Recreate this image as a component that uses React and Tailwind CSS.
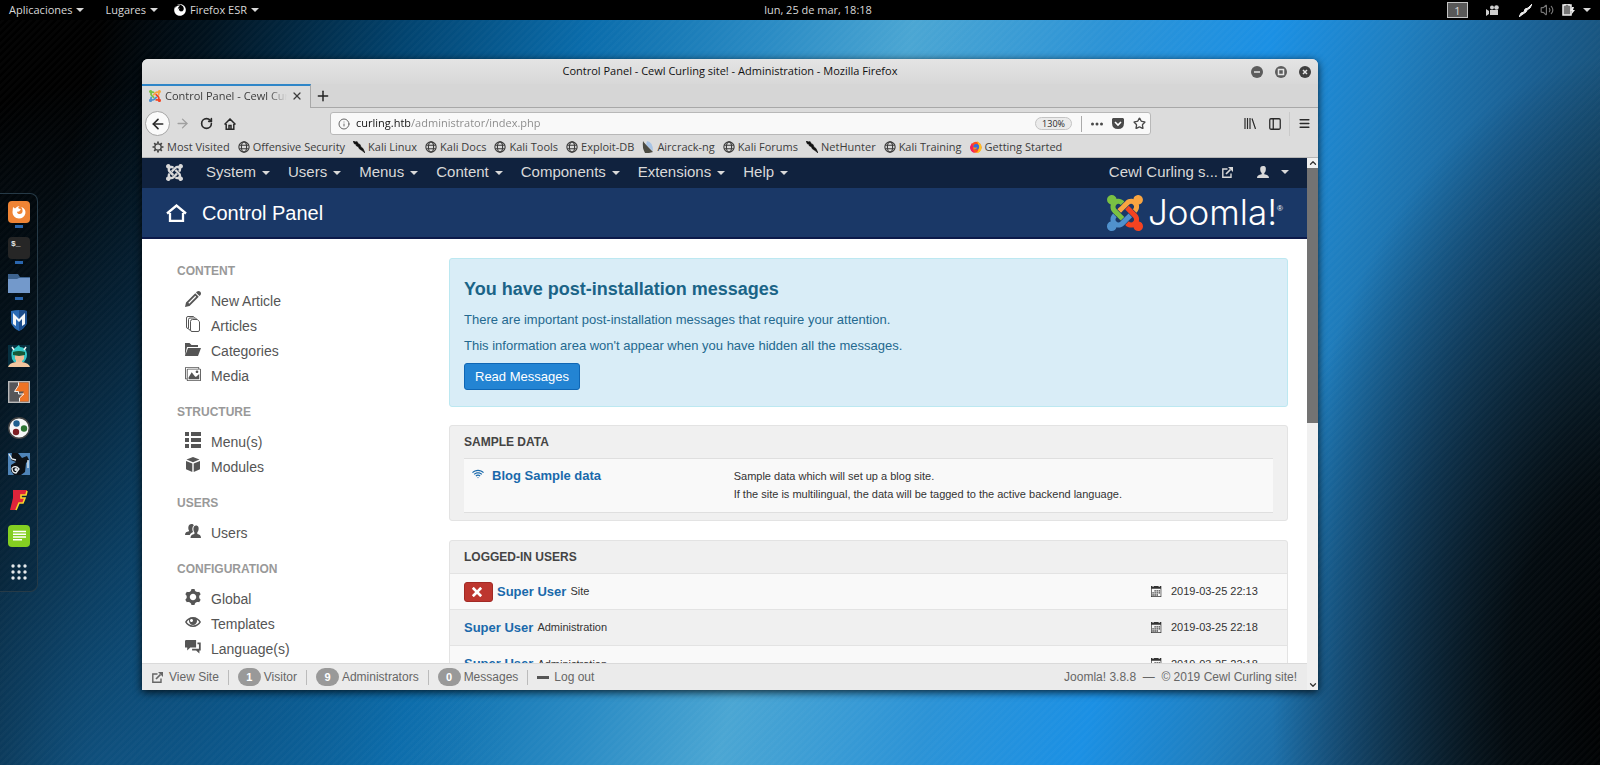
import { FaFirefox } from "react-icons/fa"
import { ImPencil, ImFolderOpen, ImImages, ImCog, ImEye, ImConnection, ImCalendar, ImCross } from "react-icons/im"
import {
  ArrowLeft, ArrowRight, RotateCw, Plus, X, Info, Star, Menu, Volume2, ChevronUp, ChevronDown, PanelLeft
} from "lucide-react"

const leaves = [
  ["#7ac143", "M.6 92.1C.6 58.8 27.4 32 60.4 32c30 0 54.5 21.9 59.2 50.2 32.6-7.6 67.1.6 96.5 30l-44.3 44.3c-20.5-20.5-42.6-16.3-55.4-3.5-14.3 14.3-14.3 37.9 0 52.2l99.5 99.5-44 44.3c-87.7-87.2-49.7-49.7-99.8-99.7-26.8-26.5-35-64.8-24.8-98.9C20.4 144.6.6 120.7.6 92.1z"],
  ["#f9a541", "M130.1 208.5l44.3 44.3c10-10 89.7-89.7 99.7-99.8 14.3-14.3 37.6-14.3 51.9 0 12.8 12.8 17 35-3.5 55.4l44 44.3c31.2-31.2 38.5-67.6 28.9-101.2 29.2-4.1 51.9-29.2 51.9-59.5 0-33.2-26.8-60.1-59.8-60.1-30.3 0-55.4 22.5-59.5 51.6-33.8-9.9-71.7-1.5-98.3 25.1-18.3 19.1-71.1 71.5-99.6 99.9z"],
  ["#f44321", "M396.4 360.7c8.2-32.7-.9-68.5-26.3-93.9-11.8-12.2 5 4.7-99.5-99.7l-44.3 44.3 99.7 99.7c14.3 14.3 14.3 37.6 0 51.9-12.8 12.8-35 17-55.4-3.5l-44 44.3c27.6 30.2 68 38.8 102.7 28 5.5 27.4 29.7 48.1 58.9 48.1 33 0 59.8-26.8 59.8-60.1 0-30.2-22.5-55-51.6-59.1z"],
  ["#5091cd", "M312.1 307.6l-44-44.3c-87 86.4-50.4 50.4-99.7 99.8-14.3 14.3-37.6 14.3-51.9 0-13.1-13.4-16.9-35.3 3.2-55.4l-44-44.3c-30.2 30.2-38 65.2-29.5 98.3-26.7 6-46.2 29.9-46.2 58.2C0 453.2 26.8 480 59.8 480c28.6 0 52.5-19.8 58.6-46.7 32.7 8.2 68.5-.6 94.2-26 32.1-32 12.2-12.4 99.5-99.7z"]
]

function JoomlaMark({ className, mono }) {
  return (
    <svg viewBox="0 32 448 448" className={className}>
      {leaves.map(([fill, d]) => <path key={fill} d={d} fill={mono ? "currentColor" : fill} />)}
    </svg>
  )
}

function Caret({ className = "" }) {
  return (
    <svg viewBox="0 0 8 4" className={"w-2 h-1 shrink-0 " + className}>
      <path d="M0 0h8L4 4z" fill="currentColor" />
    </svg>
  )
}

function OutLink({ className }) {
  return (
    <svg viewBox="0 0 11 11" className={className} fill="none" stroke="currentColor" strokeWidth="1.400">
      <path d="M5.500 2H.8v8.200H9V6.500" />
      <path d="M4 7l4.500-4.500" strokeWidth="1.700" />
      <path d="M6 0h5v5z" fill="currentColor" stroke="none" />
    </svg>
  )
}

/* ---------- bookmark icons ---------- */

function Globe() {
  return (
    <svg viewBox="0 0 14 14" className="size-3 shrink-0" fill="none" stroke="#3c3c3c" strokeWidth="1.3">
      <circle cx="7" cy="7" r="6" />
      <ellipse cx="7" cy="7" rx="3" ry="6" />
      <path d="M1.5 5h11M1.5 9h11" />
    </svg>
  )
}

function Knife() {
  return (
    <svg viewBox="0 0 12 12" className="size-3 shrink-0">
      <path d="M0 0l3 1 1-.6L5.500 3l1.500.4L8 6l2 1.500L12 12 9 9.500 6.500 8 5.500 6 3 4.500 3.200 3.300 1.500 3z" fill="#111" stroke="#111" strokeWidth=".6" />
    </svg>
  )
}

function Gear() {
  return (
    <svg viewBox="0 0 14 14" className="size-3 shrink-0" fill="none" stroke="#3c3c3c">
      <circle cx="7" cy="7" r="3.700" strokeWidth="1.500" />
      <path strokeWidth="2" d="M7 .6v2.400M7 11v2.400M.6 7h2.400M11 7h2.400M2.600 2.600l1.500 1.500M9.900 9.900l1.500 1.500M2.600 11.400l1.500-1.500M9.900 4.100l1.500-1.500" />
    </svg>
  )
}

function Aircrack() {
  return (
    <svg viewBox="0 0 12 12" className="size-3 shrink-0">
      <path d="M5 0q6 1 6 10L4 4z" fill="#a9c4e4" />
      <path d="M1 0q1 2 10 11l-4 1H3Q0 7 1 0z" fill="#4a4a42" />
    </svg>
  )
}

function FoxColor() {
  return (
    <svg viewBox="0 0 12 12" className="size-3 shrink-0">
      <circle cx="6" cy="6.300" r="5.500" fill="#ff4f1f" />
      <path d="M7 0q5 3 4.500 7.500A5.500 5.500 0 0 1 6 12q5-3 1-12z" fill="#ffc21f" />
      <path d="M0 6q0 5 5 6-3-3-2-6L2 2z" fill="#f21d63" />
      <circle cx="6.300" cy="5.800" r="2.800" fill="#2f6fe0" />
      <path d="M3.500 6q2 1 4 0-1 3-4 2z" fill="#ff8a1f" />
    </svg>
  )
}

const bookmarks = [
  ["Most Visited", Gear],
  ["Offensive Security", Globe],
  ["Kali Linux", Knife],
  ["Kali Docs", Globe],
  ["Kali Tools", Globe],
  ["Exploit-DB", Globe],
  ["Aircrack-ng", Aircrack],
  ["Kali Forums", Globe],
  ["NetHunter", Knife],
  ["Kali Training", Globe],
  ["Getting Started", FoxColor]
]

/* ---------- sidebar icons ---------- */

function Papers({ className }) {
  return (
    <svg viewBox="0 0 16 16" className={className} fill="none" stroke="currentColor">
      <path d="M3 12.500q-1.500 0-1.500-1.500V2Q1.500.5 3 .5h5.500l1 1" />
      <path d="M5 14q-1.500 0-1.500-1.500v-9Q3.500 2 5 2h5.500l1 1" />
      <path d="M7.500 3.500h4.800l2.200 2.200v8.300q0 1.500-1.500 1.500H7q-1.500 0-1.500-1.500V5.500q0-2 2-2z" />
    </svg>
  )
}

function Rows({ className }) {
  return (
    <svg viewBox="0 0 16 16" className={className} fill="currentColor">
      <path d="M0 0h4v4H0zM6 0h10v4H6zM0 6h4v4H0zM6 6h10v4H6zM0 12h4v4H0zM6 12h10v4H6z" />
    </svg>
  )
}

function Cube({ className }) {
  return (
    <svg viewBox="0 0 16 16" className={className} fill="currentColor">
      <path d="M8 0l6.500 2.500L8 5.200 1.500 2.500zM1 4l6.300 2.600V15L1 12.200zM15 4L8.700 6.600V15l6.300-2.800z" />
    </svg>
  )
}

function People({ className }) {
  return (
    <svg viewBox="0 0 16 16" className={className} fill="currentColor">
      <path d="M6.500 1C8 1 8.700 1.600 8.800 2.600 7 4 7 7 8 9c-2 1-3 2-3.200 3H0c0-2.500 1.500-3.200 4-3.700V7.500C2.800 5.500 3 1 6.500 1z" />
      <path d="M11 2.500c2.500 0 3 2.300 2.500 4.500-.2 1-.6 1.700-1.200 2.300V11c2.600.7 3.700 1.500 3.700 4H5.500c0-2.500 1.300-3.400 3.900-4V9.300C8 7.500 7.800 2.500 11 2.500z" />
    </svg>
  )
}

function Chat({ className }) {
  return (
    <svg viewBox="0 0 18 16" className={className} fill="currentColor">
      <path d="M1 0h11.500v8.500H6L2.500 12V8.500H0V1z" />
      <path d="M14 3h3.700v9h-1.500v3.200L12.500 12H8v-2h7.700V5H14z" />
    </svg>
  )
}

const sections = [
  ["CONTENT", [["New Article", ImPencil], ["Articles", Papers], ["Categories", ImFolderOpen], ["Media", ImImages]]],
  ["STRUCTURE", [["Menu(s)", Rows], ["Modules", Cube]]],
  ["USERS", [["Users", People]]],
  ["CONFIGURATION", [["Global", ImCog], ["Templates", ImEye], ["Language(s)", Chat]]]
]

/* ---------- dock ---------- */

const dock = [
  { name: "Firefox", open: true, art: <>
    <rect width="22" height="22" rx="4" fill="#ef8435" />
    <path d="M5 6l2 1.500Q9 5 11.500 5L10 7l3 1.500-2 2-2 .2c0 2.300 3.500 3.300 5 1.300 1-1.600.8-4-.8-6C17 7.500 18 10 17.300 12.800 16.500 16 14 17.500 11 17.500 7 17.500 4.500 14.500 4.500 11z" fill="#fff" />
  </> },
  { name: "Terminal", open: true, art: <>
    <rect width="22" height="22" rx="4" fill="#262626" />
    <text x="3" y="9" fontSize="8" fontFamily="Liberation Mono, monospace" fontWeight="bold" fill="#e8e8e8">$_</text>
  </> },
  { name: "Files", open: true, art: <>
    <path d="M0 1h10l2 3h10v16H0z" fill="#3d638f" />
    <path d="M0 6h9l2-1h11v15H0z" fill="#7399cb" />
  </> },
  { name: "Metasploit", art: <>
    <path d="M3 2q8-2 16 0v12q-2 5-8 8-6-3-8-8z" fill="#2a6ab4" />
    <path d="M11 1q4 0 8 1v12q-2 5-8 8z" fill="#1c4d8c" />
    <path d="M5 15V4l6 6 6-6v11l-3 2v-7l-3 3-3-3v7z" fill="#f2f5f8" />
  </> },
  { name: "Armitage", art: <>
    <rect width="22" height="22" fill="#073040" />
    <path d="M4 14Q2 5 7 3l4-3 1 2q6 0 7 7 0 3-1 5l-2 3H6z" fill="#36c7c6" />
    <path d="M0 22q1-4 8-5v-3h6v3q7 1 8 5z" fill="#f3c7a0" />
    <path d="M7 9h9v5l-3 3h-3l-3-3z" fill="#f0bd96" />
    <path d="M5 7q6-2 12 0v3l-6 1-6-1z" fill="#155a3a" />
    <path d="M4 2l2 3M18 2l-2 3" stroke="#f5f5f5" strokeWidth="1.500" />
  </> },
  { name: "Burp Suite", art: <>
    <rect x=".7" y=".7" width="20.600" height="20.600" fill="#55565a" stroke="#b9b9b9" strokeWidth="1.400" />
    <path d="M10.500 1.400h10.100v19.200H11.500v-4L16 10.500H10.500z" fill="#ee7426" />
    <path d="M10.500 4L6.500 10.500h5z" fill="#ee7426" />
    <path d="M10.500 1.400v3L6.500 10.500h4v2.500H16l-4.500 4v3.600" stroke="#eee" fill="none" />
  </> },
  { name: "Maltego", art: <>
    <circle cx="11" cy="11" r="10.300" fill="#f6f6f6" stroke="#454545" strokeWidth="1.400" />
    <circle cx="8.500" cy="6.500" r="3.200" fill="#1f5f8f" />
    <circle cx="16" cy="11.500" r="3.200" fill="#2d7331" />
    <circle cx="8" cy="15" r="3.200" fill="#7d1f24" />
  </> },
  { name: "BeEF", art: <>
    <rect width="22" height="22" fill="#4e84b8" />
    <path d="M4 0h6l4 5 5-2 2 4-3 3-1 9-4 3H6l-3-4v-6l5-3-5-2z" fill="#0c1116" />
    <path d="M4 15q4-3 7 1l-3 4q-4 0-4-5M1 1l3 5 4 1M20 7v8" stroke="#e8eef2" strokeWidth="1.300" fill="none" />
    <circle cx="8" cy="16.500" r="1.500" fill="#e8eef2" />
  </> },
  { name: "Faraday", art: <>
    <path d="M5 1h14l-1 5h-5v3h4l-2 5h-4l-3 7H2L5 9z" fill="#e0243a" />
    <path d="M19 2l-1 4h-5v3h4l-2 5h-4l-3 7" stroke="#f8d62c" strokeWidth="1.600" fill="none" />
  </> },
  { name: "Leafpad", art: <>
    <rect width="22" height="22" rx="4" fill="#84cf22" />
    <path d="M5 6.500h13M5 9.300h13M5 12h13M5 14.700h9" stroke="#fff" strokeWidth="1.600" />
  </> },
  { name: "Show applications", art: <g fill="#e6eaec">
    {[5, 11, 17].map(y => [5, 11, 17].map(x => <circle key={x + "-" + y} cx={x} cy={y} r="1.700" />))}
  </g> }
]

function Dock() {
  return (
    <aside className="w-[38px] shrink-0 self-center rounded-r-lg border border-l-0 border-[#263a47] bg-black/15 pb-px">
      {dock.map(d => (
        <button key={d.name} type="button" aria-label={d.name} className="flex h-9 w-full flex-col items-center pt-[7px]">
          <svg viewBox="0 0 22 22" className="size-[22px] shrink-0">{d.art}</svg>
          {d.open && <span className="mt-[2px] h-[3px] w-2 bg-[#2a66ae]" />}
        </button>
      ))}
    </aside>
  )
}

function TopBar() {
  return (
    <header className="flex h-5 shrink-0 items-center bg-black px-[9px] text-[11px] font-medium text-[#d8d8d8]">
      <div className="flex flex-1 items-center">
        <button type="button" className="mr-[21px] flex items-center gap-1">Aplicaciones <Caret /></button>
        <button type="button" className="mr-4 flex items-center gap-1">Lugares <Caret /></button>
        <button type="button" className="flex items-center gap-1">
          <FaFirefox className="size-3 text-white" />Firefox ESR <Caret />
        </button>
      </div>
      <time className="ml-9">lun, 25 de mar, 18:18</time>
      <div className="flex flex-1 items-center justify-end">
        <button type="button" className="mr-[18px] h-4 w-[21px] border border-[#c4c4c4] bg-[#585858] leading-none">1</button>
        <svg viewBox="0 0 13 11" className="mr-5 h-[11px] w-[13px]" fill="#cfcfcf">
          <circle cx="6" cy="2.500" r="2" /><circle cx="10.500" cy="2.500" r="2.300" />
          <path d="M4 5h8v5H4zM0 4l3 2v3l-3 2z" />
        </svg>
        <svg viewBox="0 0 13 13" className="mr-2 size-[13px]">
          <path d="M0 13l2-4 3-1 1-3 3-1 4-4-2 4-3 2-1 2-3 2z" fill="#eee" stroke="#eee" />
        </svg>
        <Volume2 className="mr-2 size-[14px] text-[#777]" />
        <svg viewBox="0 0 13 12" className="mr-2 h-3 w-[13px]">
          <path d="M3 0h4v1h2v10H1V1h2z" fill="#777" stroke="#eee" strokeWidth="1.500" />
          <path d="M10 3l-2 4h2l-1 4 4-5h-2l1-3z" fill="#eee" />
        </svg>
        <Caret />
      </div>
    </header>
  )
}

function BrowserChrome() {
  return (
    <div className="shrink-0 bg-[#dcdcdc] text-[11px] text-[#3c3c3c]">
      <div className="flex h-[25px] items-center bg-linear-to-b from-[#e4e4e4] to-[#d8d8d8] px-[7px]">
        <span className="w-[60px]" />
        <h1 className="flex-1 text-center font-medium text-[#111]">Control Panel - Cewl Curling site! - Administration - Mozilla Firefox</h1>
        <div className="flex w-[60px] justify-end gap-3">
          {["Minimize", "Maximize", "Close"].map(n => (
            <button key={n} type="button" aria-label={n}>
              <svg viewBox="0 0 12 12" className="size-3" fill="none" stroke="#e4e4e4" strokeWidth="1.500">
                <circle cx="6" cy="6" r="6" fill={n === "Close" ? "#3f3f3f" : "#5c5c5c"} stroke="none" />
                {n === "Minimize" && <path d="M3 6h6" />}
                {n === "Maximize" && <rect x="3.500" y="3.500" width="5" height="5" />}
                {n === "Close" && <path d="M4 4l4 4M8 4l-4 4" />}
              </svg>
            </button>
          ))}
        </div>
      </div>

      <div className="flex h-6 bg-[#d6d6d6]">
        <div className="flex w-[169px] items-center border-t-2 border-r border-t-[#2f86c8] border-r-[#a8a8a8] bg-[#dcdcdc] pb-[2px] pl-[7px]">
          <JoomlaMark className="size-3 shrink-0" />
          <span className="ml-1 flex-1 overflow-hidden whitespace-nowrap mask-r-from-85% mask-r-to-100%">Control Panel - Cewl Curling site!</span>
          <button type="button" aria-label="Close tab" className="mr-[7px] ml-1"><X className="size-3" strokeWidth={2.5} /></button>
        </div>
        <div className="flex flex-1 items-center border-b border-[#a8a8a8] pl-1">
          <button type="button" aria-label="New tab"><Plus className="size-4 text-[#222]" strokeWidth={2.2} /></button>
        </div>
      </div>

      <div className="flex h-[31px] items-center pr-[7px] pl-[3px] text-[#2a2a2a]">
        <button type="button" aria-label="Back" className="flex size-[25px] items-center justify-center rounded-full border border-[#a5a5a5] bg-[#fafafa]">
          <ArrowLeft className="size-4" strokeWidth={2.5} />
        </button>
        <button type="button" aria-label="Forward" className="ml-[5px]"><ArrowRight className="size-[15px] text-[#a0a0a0]" strokeWidth={2.2} /></button>
        <button type="button" aria-label="Reload" className="ml-[10px]"><RotateCw className="size-[13px]" strokeWidth={3} /></button>
        <button type="button" aria-label="Home" className="ml-[11px]">
          <svg viewBox="0 0 12 12" className="size-3" fill="none" stroke="currentColor" strokeWidth="1.500">
            <path d="M.5 6.500L6 1l5.500 5.500M2.200 6v5.200h7.600V6M5 11V7.500h2V11" />
          </svg>
        </button>
        <div className="mr-[93px] ml-[94px] flex h-[23px] flex-1 items-center rounded-[3px] border border-[#b8b8b8] bg-[#f9f9f9] pr-1 pl-[7px]">
          <Info className="size-3 text-[#666]" />
          <input
            aria-label="Address"
            defaultValue="curling.htb/administrator/index.php"
            className="ml-[6px] min-w-0 flex-1 bg-linear-to-r from-[#111] from-[54px] to-[#888] to-[54px] bg-clip-text text-transparent outline-none"
          />
          <span className="mr-[9px] rounded-full border border-[#c4c4c4] bg-[#ebebeb] px-[6px] text-[9px] leading-[11px]">130%</span>
          <span className="mr-[9px] h-4 w-px bg-[#aaa]" />
          <svg viewBox="0 0 12 4" className="mr-[9px] h-1 w-3" fill="#4a4a4a">
            <circle cx="1.500" cy="2" r="1.500" /><circle cx="6" cy="2" r="1.500" /><circle cx="10.500" cy="2" r="1.500" />
          </svg>
          <svg viewBox="0 0 12 11" className="mr-[9px] h-[11px] w-3">
            <path d="M1 0h10l1 1v4q0 6-6 6T0 5V1z" fill="#4a4a4a" />
            <path d="M3 4l3 3 3-3" fill="none" stroke="#fff" strokeWidth="1.600" />
          </svg>
          <Star className="size-[13px] text-[#4a4a4a]" strokeWidth={2.5} />
        </div>
        <svg viewBox="0 0 12 11" className="mr-3 h-[11px] w-3" stroke="#2a2a2a" strokeWidth="1.200">
          <path d="M1 0v11M3.500 0v11M6 0v11M8 .5L11.500 11" />
        </svg>
        <PanelLeft className="mr-[7px] size-[14px]" strokeWidth={2.2} />
        <span className="mr-[8px] h-6 w-px bg-[#cacaca]" />
        <Menu className="size-[13px]" strokeWidth={2.8} />
      </div>

      <nav className="flex h-[19px] items-center gap-2 overflow-hidden border-b border-[#b5b5b5] px-[10px] pb-[2px] whitespace-nowrap">
        {bookmarks.map(([name, Icon]) => (
          <a key={name} href="#" className="flex items-center gap-[3px]"><Icon />{name}</a>
        ))}
      </nav>
    </div>
  )
}

function AdminHeader() {
  return (
    <>
      <nav className="flex h-[30px] shrink-0 items-center bg-[#10223e] pr-[18px] pb-[2px] pl-6 text-[15px] text-[#d9d9d9]">
        <a href="#" aria-label="Joomla"><JoomlaMark mono className="mr-[23px] size-[17px]" /></a>
        <div className="flex flex-1 gap-[18px]">
          {["System", "Users", "Menus", "Content", "Components", "Extensions", "Help"].map(m => (
            <a key={m} href="#" className="flex items-center gap-[6px]">{m} <Caret className="mt-px" /></a>
          ))}
        </div>
        <a href="#" className="mr-6 flex items-center gap-1">Cewl Curling s... <OutLink className="size-[11px]" /></a>
        <a href="#" aria-label="Account" className="flex items-center gap-3">
          <svg viewBox="0 0 12 12" className="size-3" fill="currentColor">
            <path d="M6 0c3 0 3 2 2.800 4C8.600 5.500 8 6.500 7.300 7v1.200C10.500 8.800 12 9.500 12 12H0c0-2.500 1.500-3.200 4.700-3.800V7C3.500 6 3.200 4.500 3.200 3 3.200 1 4 0 6 0z" />
          </svg>
          <Caret />
        </a>
      </nav>
      <div className="flex h-[51px] shrink-0 items-center border-b-2 border-[#0c1a4a] bg-[#1a3867] pr-6 pl-6 text-white">
        <svg viewBox="0 0 21 18" className="h-[18px] w-[21px]" fill="none" stroke="currentColor" strokeWidth="2.300">
          <path d="M1 9.500L10.500 1.500 20 9.500M4 9v8h13V9" />
        </svg>
        <h2 className="ml-[15px] flex-1 text-xl">Control Panel</h2>
        <JoomlaMark className="size-9" />
        <span className="ml-[5px] font-['Inter'] text-[35px] leading-none font-light">Joomla!</span>
        <sup className="text-[8px]">®</sup>
      </div>
    </>
  )
}

function Sidebar() {
  return (
    <aside className="w-[307px] shrink-0 pt-[22px] pl-[35px] text-[#555]">
      {sections.map(([title, items]) => (
        <section key={title} className="mb-[14px]">
          <h3 className="mb-[7px] text-xs leading-5 font-bold text-[#999]">{title}</h3>
          <ul className="pl-2">
            {items.map(([label, Icon]) => (
              <li key={label}>
                <a href="#" className="flex h-[25px] items-center gap-[10px] text-sm">
                  <Icon className="mb-1 size-4" />{label}
                </a>
              </li>
            ))}
          </ul>
        </section>
      ))}
    </aside>
  )
}

const sessions = [
  { where: "Site", date: "2019-03-25 22:13", kick: true },
  { where: "Administration", date: "2019-03-25 22:18" },
  { where: "Administration", date: "2019-03-25 22:18" }
]

function Panels() {
  return (
    <main className="min-w-0 flex-1 pt-[19px] pr-[19px] text-[#333]">
      <section className="mb-[18px] rounded-[3px] border border-[#bce8f1] bg-[#d9edf7] px-[14px] pt-[18px] pb-4 text-[#24698f]">
        <h3 className="text-lg leading-6 font-bold text-[#1a6487]">You have post-installation messages</h3>
        <p className="mt-2 text-[13px] leading-[22px]">There are important post-installation messages that require your attention.</p>
        <p className="mt-1 text-[13px] leading-[22px]">This information area won't appear when you have hidden all the messages.</p>
        <button type="button" className="mt-[6px] h-[27px] rounded-[3px] border border-[#0f66b4] bg-[#2384d3] px-[10px] text-[13px] text-white">Read Messages</button>
      </section>

      <section className="mb-[19px] rounded-[3px] border border-[#e3e3e3] bg-[#f0f0f0] px-[14px] pb-[7px]">
        <h3 className="text-xs leading-8 font-bold text-[#444]">SAMPLE DATA</h3>
        <div className="flex border-y border-[#dfdfdf] bg-[#f9f9f9] px-2 pt-[8px] pb-[9px]">
          <a href="#" className="flex w-[33%] items-start gap-2 text-[13px] leading-[18px] font-bold text-[#1a69ab]">
            <ImConnection className="mt-px size-3" />Blog Sample data
          </a>
          <p className="text-[11px] leading-[18px]">
            Sample data which will set up a blog site.<br />
            If the site is multilingual, the data will be tagged to the active backend language.
          </p>
        </div>
      </section>

      <section className="rounded-[3px] border border-[#e3e3e3] bg-[#f0f0f0]">
        <h3 className="px-[14px] text-xs leading-8 font-bold text-[#444]">LOGGED-IN USERS</h3>
        <table className="w-full border-collapse">
          <tbody>
            {sessions.map((s, i) => (
              <tr key={i} className="h-9 border-t border-[#e3e3e3] odd:bg-[#f9f9f9]">
                <td className="pl-[14px]">
                  <div className="flex items-center gap-1">
                    {s.kick && (
                      <button type="button" aria-label="Log out user" className="flex h-5 w-[29px] items-center rounded-[3px] border border-[#a22a25] bg-[#bd362f] pl-[7px] text-white">
                        <ImCross className="size-[10px]" />
                      </button>
                    )}
                    <a href="#" className="text-[13px] font-bold text-[#1a69ab]">Super User</a>
                    <small className="text-[11px]">{s.where}</small>
                  </div>
                </td>
                <td className="w-[136px] text-[11px]">
                  <div className="flex items-center gap-[9px]"><ImCalendar className="size-[11px]" />{s.date}</div>
                </td>
              </tr>
            ))}
          </tbody>
        </table>
      </section>
    </main>
  )
}

function StatusBar() {
  const counts = [[1, "Visitor"], [9, "Administrators"], [0, "Messages"]]
  return (
    <footer className="flex h-[27px] shrink-0 items-center border-t border-[#dadada] bg-[#ebebeb] px-[10px] text-xs text-[#666]">
      <a href="#" className="flex items-center gap-[6px]"><OutLink className="size-[11px]" />View Site</a>
      {counts.map(([n, label]) => (
        <span key={label} className="flex items-center">
          <span className="mx-[9px] h-[15px] w-px bg-[#bbb]" />
          <a href="#" className="flex items-center gap-[3px]">
            <span className="w-[23px] rounded-full bg-[#999] text-center text-[11px] leading-[18px] font-bold text-white">{n}</span>
            {label}
          </a>
        </span>
      ))}
      <span className="mx-[9px] h-[15px] w-px bg-[#bbb]" />
      <a href="#" className="flex flex-1 items-center gap-[5px]"><span className="h-[3px] w-3 bg-[#555]" />Log out</a>
      <span className="whitespace-pre">Joomla! 3.8.8  —  © 2019 Cewl Curling site!</span>
    </footer>
  )
}

function Scrollbar() {
  return (
    <div className="flex w-[11px] shrink-0 flex-col items-center bg-[#f0f0f0] text-[#333]">
      <ChevronUp className="size-[10px]" strokeWidth={3} />
      <span className="h-[48%] w-full bg-[#737373]" />
      <ChevronDown className="mt-auto size-[10px]" strokeWidth={3} />
    </div>
  )
}

export default function App() {
  return (
    <div className="flex h-screen flex-col overflow-hidden bg-[repeating-linear-gradient(135deg,rgba(255,255,255,0.02)_0px,rgba(255,255,255,0.02)_2px,transparent_3px,transparent_5px),radial-gradient(ellipse_360px_650px_at_102%_92%,rgba(0,0,0,1),rgba(0,0,0,0.85)_35%,transparent),radial-gradient(ellipse_420px_720px_at_6%_105%,rgba(25,110,170,0.6),transparent),linear-gradient(105deg,#000_0%,#000_6%,#01121e_12%,#024470_23%,#0a6cab_33%,#2a8bc4_43%,#4ba6d3_51%,#2c93d6_62%,#1b90e4_71%,#1f7fc0_78%,#1a5f92_86%,#174a6b_93%,#123a54_100%)] font-['Open_Sans',sans-serif]">
      <TopBar />
      <div className="flex min-h-0 flex-1">
        <Dock />
        <div className="mt-[39px] mr-[282px] mb-[75px] ml-[104px] flex min-w-0 flex-1 flex-col overflow-hidden rounded-t-md shadow-[0_2px_8px_rgba(0,0,0,0.8)]">
          <BrowserChrome />
          <div className="flex min-h-0 flex-1 font-['Liberation_Sans',Arial,sans-serif]">
            <div className="flex min-w-0 flex-1 flex-col bg-white">
              <AdminHeader />
              <div className="flex min-h-0 flex-1 overflow-hidden">
                <Sidebar />
                <Panels />
              </div>
              <StatusBar />
            </div>
            <Scrollbar />
          </div>
        </div>
      </div>
    </div>
  )
}
